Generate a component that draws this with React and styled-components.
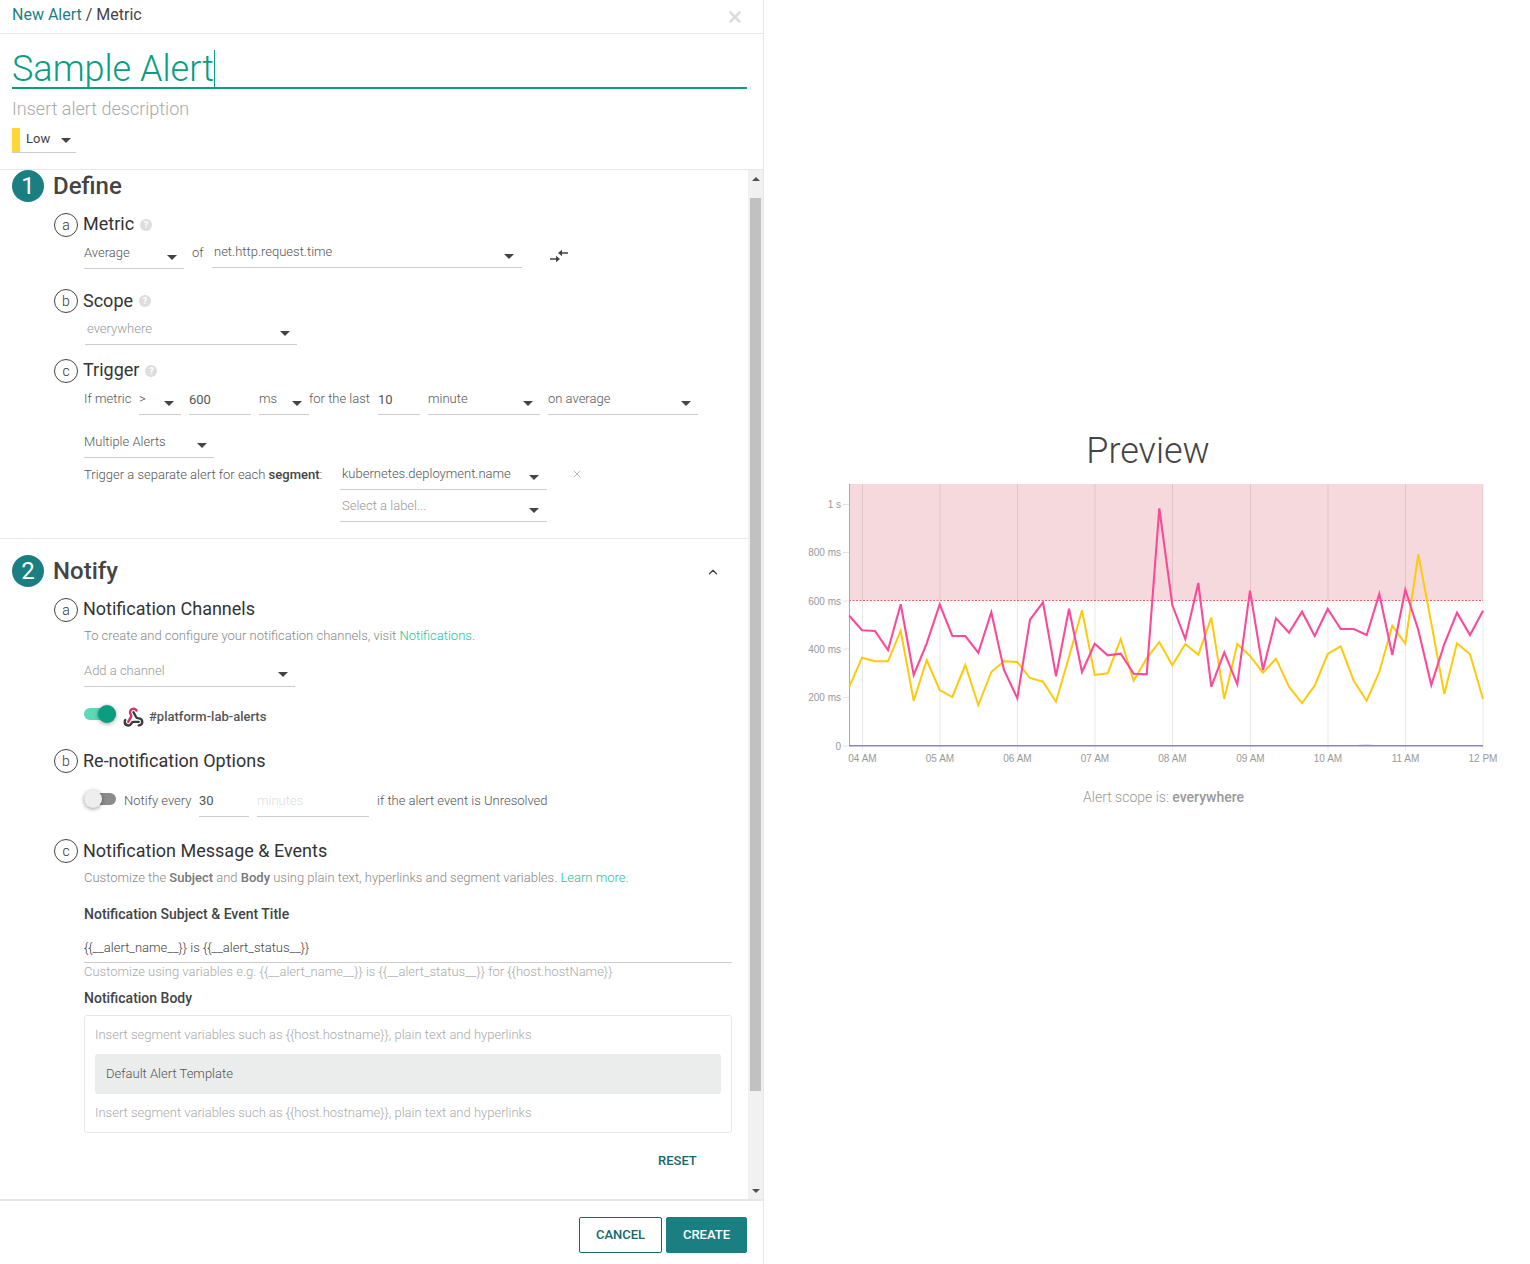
import React from 'react';
import styled, { createGlobalStyle } from 'styled-components';
import { ChevronUp, X } from 'lucide-react';

const GlobalStyle = createGlobalStyle`
  body {
    margin: 0;
    background: #fff;
    font-family: Roboto, "Noto Sans", sans-serif;
    color: #444;
  }
  * { box-sizing: border-box; }
`

const Page = styled.div`
  display: flex;
  width: 1530px;
  height: 1264px;
  overflow: hidden;
`

const Editor = styled.div`
  display: flex;
  flex-direction: column;
  width: 764px;
  height: 100%;
  border-right: 1px solid #e3e9e9;
`

const Header = styled.div`
  display: flex;
  justify-content: space-between;
  height: 34px;
  padding: 5px 19px 0 12px;
  border-bottom: 1px solid #e3e9e9;
  font-size: 16px;
  line-height: 19px;
`

const Crumb = styled.a`
  color: #1b7f82;
`

const CloseIcon = styled(X)`
  margin-top: 3px;
  color: #ddd;
`

const TitleBlock = styled.div`
  padding: 0 16px 16px 12px;
  border-bottom: 1px solid #e3e9e9;
`

const TitleField = styled.div`
  display: flex;
  align-items: flex-end;
  height: 55px;
  border-bottom: 2px solid #0a9d80;
  font-size: 36px;
  font-weight: 300;
  line-height: 35px;
  color: #0a9d80;
`

const Cursor = styled.span`
  width: 1px;
  height: 37px;
  background: #0a9d80;
`

const Description = styled.div`
  margin-top: 8px;
  font-size: 18px;
  font-weight: 300;
  line-height: 24px;
  color: #aaa;
`

const Severity = styled.div`
  display: flex;
  width: 64px;
  height: 25px;
  margin-top: 7px;
  border-bottom: 1px solid #ccc;
  font-size: 13px;
  line-height: 22px;
`

const SeverityBar = styled.span`
  width: 8px;
  height: 24px;
  margin-right: 6px;
  background: #ffd633;
`

const Main = styled.div`
  display: flex;
  flex: 1;
  min-height: 0;
`

const Content = styled.div`
  flex: 1;
  min-width: 0;
`

const Section = styled.section`
  padding: ${(p) => (p.$first ? '0' : '16px')} 0 16px;
  border-bottom: ${(p) => (p.$first ? '1px solid #e3e9e9' : 'none')};
`

const StepHead = styled.div`
  display: flex;
  align-items: center;
  height: 32px;
  padding: 0 28px 0 12px;
`

const StepNumber = styled.span`
  display: flex;
  align-items: center;
  justify-content: center;
  width: 32px;
  height: 32px;
  margin-right: 9px;
  border-radius: 50%;
  background: #1b7f82;
  color: #fff;
  font-size: 24px;
`

const StepTitle = styled.h2`
  flex: 1;
  margin: 0;
  font-size: 24px;
  font-weight: 500;
  color: #444;
`

const Collapse = styled(ChevronUp)`
  margin-top: 2px;
`

const SubHead = styled.div`
  display: flex;
  align-items: center;
  height: 24px;
  margin: ${(p) => p.$mt}px 0 0 54px;
`

const Letter = styled.span`
  display: flex;
  align-items: center;
  justify-content: center;
  width: 24px;
  height: 24px;
  margin-right: 5px;
  border: 1px solid #444;
  border-radius: 50%;
  font-size: 14px;
  font-weight: 300;
  line-height: 20px;
  color: #333;
`

const SubTitle = styled.h3`
  margin: 0 0 ${(p) => (p.$raised ? 4 : 2)}px;
  font-size: 18px;
  font-weight: 400;
  color: #333;
`

const Help = styled.span`
  display: flex;
  align-items: center;
  justify-content: center;
  width: 12px;
  height: 12px;
  margin-left: 6px;
  border-radius: 50%;
  background: #ddd;
  color: #fff;
  font-size: 9px;
  font-weight: 700;
`

const Row = styled.div`
  display: flex;
  align-items: flex-start;
  margin: ${(p) => p.$mt || 0}px 0 0 84px;
  height: ${(p) => (p.$h ? `${p.$h}px` : 'auto')};
`

const Plain = styled.span`
  flex: none;
  width: ${(p) => (p.$w ? `${p.$w}px` : 'auto')};
  margin: ${(p) => p.$mt || 0}px 0 0 ${(p) => p.$ml || 0}px;
  font-size: 13px;
  font-weight: 300;
  line-height: 18px;
  color: #555;
  white-space: nowrap;

  b { font-weight: 500; color: #444; }
`

const selectColor = (p) => {
  if (p.$faint) return '#ddd'
  return p.$muted ? '#999' : '#555'
}

const Select = styled.div`
  flex: none;
  display: flex;
  justify-content: space-between;
  width: ${(p) => p.$w}px;
  height: 26px;
  margin: ${(p) => p.$mt || 0}px 0 0 ${(p) => p.$ml || 0}px;
  padding: ${(p) => p.$tp || 1}px ${(p) => p.$pr || 7}px 0 ${(p) => p.$pad || 0}px;
  border-bottom: 1px solid #ccc;
  font-size: 13px;
  font-weight: ${(p) => (p.$value ? 400 : 300)};
  line-height: 18px;
  color: ${selectColor};
`

const Caret = styled.i`
  flex: none;
  width: 0;
  height: 0;
  margin: ${(p) => p.$mt || 11}px 0 0 ${(p) => p.$ml || 0}px;
  border-top: 5px solid #444;
  border-left: 5px solid transparent;
  border-right: 5px solid transparent;
`

const Note = styled.p`
  margin: ${(p) => p.$mt}px 0 0 84px;
  font-size: 13px;
  font-weight: 300;
  line-height: 18px;
  color: #888;

  b { font-weight: 500; color: #777; }
`

const Link = styled.a`
  color: #22c39d;
`

const SwitchTrack = styled.span`
  position: relative;
  flex: none;
  display: block;
  width: 32px;
  height: 12px;
  margin-top: 3px;
  border-radius: 6px;
  background: ${(p) => (p.$on ? '#5cdab8' : '#8c8c8c')};
`

const SwitchKnob = styled.span`
  position: absolute;
  top: -3px;
  left: ${(p) => (p.$on ? '14px' : '0')};
  width: 18px;
  height: 18px;
  border-radius: 50%;
  background: ${(p) => (p.$on ? '#0a9d80' : '#eeeeee')};
  box-shadow: 0 1px 4px rgba(0, 0, 0, 0.4);
`

const ChannelName = styled.span`
  margin: 3px 0 0 5px;
  font-size: 13px;
  font-weight: 500;
  line-height: 18px;
  color: #555;
`

const HookIcon = styled.svg`
  flex: none;
  width: 21px;
  height: 21px;
  margin: 2px 0 0 7px;
`

const SwapIcon = styled.svg`
  flex: none;
  width: 18px;
  height: 16px;
  margin: 11px 0 0 28px;
`

const RemoveIcon = styled(X)`
  flex: none;
  margin: 4px 0 0 24px;
  color: #aaa;
`

const Label = styled.div`
  margin: ${(p) => p.$mt}px 0 0 84px;
  font-size: 14px;
  font-weight: 500;
  line-height: 20px;
  color: #444;
`

const TextInput = styled.div`
  width: 648px;
  height: 25px;
  margin: 14px 0 0 84px;
  padding-top: 1px;
  border-bottom: 1px solid #ccc;
  font-size: 13px;
  font-weight: 300;
  line-height: 18px;
  color: #444;
`

const Hint = styled.div`
  margin-left: 84px;
  padding-top: 1px;
  font-size: 13px;
  font-weight: 300;
  line-height: 16px;
  color: #aaa;
`

const BodyBox = styled.div`
  width: 648px;
  height: 118px;
  margin: 7px 0 0 84px;
  padding: 10px 10px 0;
  border: 1px solid #e3e9e9;
  border-radius: 3px;
  font-size: 13px;
  font-weight: 300;
  line-height: 18px;
  color: #aaa;
`

const Template = styled.div`
  height: 40px;
  margin: 10px 0;
  padding: 0 11px;
  border-radius: 3px;
  background: #ebecec;
  line-height: 40px;
  color: #555;
`

const ResetButton = styled.button`
  display: block;
  margin: 20px 0 0 658px;
  padding: 0;
  border: none;
  background: none;
  font: 500 13px/16px Roboto, sans-serif;
  color: #15696b;
`

const Scrollbar = styled.div`
  display: flex;
  flex-direction: column;
  align-items: center;
  flex: none;
  width: 15px;
  background: #f1f1f1;
`

const ArrowCell = styled.span`
  display: flex;
  align-items: center;
  justify-content: center;
  flex: none;
  width: 15px;
  height: 17px;
`

const ArrowUp = styled.i`
  border-bottom: 4px solid #505050;
  border-left: 4px solid transparent;
  border-right: 4px solid transparent;
`

const ArrowDown = styled.i`
  border-top: 4px solid #505050;
  border-left: 4px solid transparent;
  border-right: 4px solid transparent;
`

const Track = styled.div`
  flex: 1;
  padding-top: 11px;
`

const Thumb = styled.div`
  width: 11px;
  height: 893px;
  background: #c1c1c1;
`

const Footer = styled.div`
  display: flex;
  justify-content: flex-end;
  gap: 4px;
  height: 65px;
  padding: 16px 16px 0 0;
  border-top: 2px solid #e3e9e9;
`

const Button = styled.button`
  width: ${(p) => p.$w}px;
  height: 36px;
  padding: 0 0 2px;
  border: 1px solid ${(p) => (p.$primary ? '#1b7f82' : '#15696b')};
  border-radius: 2px;
  background: ${(p) => (p.$primary ? '#1b7f82' : '#fff')};
  color: ${(p) => (p.$primary ? '#fff' : '#15696b')};
  font: 500 13px Roboto, sans-serif;
`

const Preview = styled.div`
  flex: 1;
  min-width: 0;
  padding-top: 430px;
`

const PreviewTitle = styled.h1`
  margin: 0;
  padding-left: 2px;
  text-align: center;
  font-size: 36px;
  font-weight: 300;
  line-height: 42px;
  color: #444;
`

const Chart = styled.svg`
  display: block;
  width: 766px;
  height: 316px;
  font-family: "Liberation Sans", Arial, sans-serif;
  font-size: 10px;
`

const ScopeNote = styled.p`
  margin: 0;
  padding-left: 33px;
  text-align: center;
  font-size: 14px;
  font-weight: 300;
  line-height: 18px;
  color: #999;

  b { font-weight: 500; }
`

const pink = [
  [178, 437], [216, 481], [255, 483], [294, 540], [332, 403], [371, 615], [410, 520], [449, 403], [487, 498], [526, 498],
  [565, 548], [604, 427], [642, 600], [682, 685], [720, 449], [759, 397], [798, 619], [837, 416], [876, 606], [914, 521],
  [953, 556], [992, 551], [1031, 611], [1070, 613], [1108, 115],
]
const pinkRight = [
  [97, 405], [136, 507], [175, 339], [214, 650], [253, 547], [292, 643], [330, 362], [369, 600], [408, 445], [447, 488],
  [486, 425], [524, 498], [563, 417], [602, 477], [641, 477], [680, 495], [718, 372], [757, 555], [796, 359], [835, 480],
  [874, 645], [913, 522], [951, 428], [990, 495], [1029, 422],
]
const yellow = [
  [178, 650], [216, 563], [255, 574], [294, 574], [332, 482], [371, 692], [410, 570], [449, 660], [487, 681], [526, 585],
  [565, 705], [604, 606], [642, 574], [682, 576], [720, 624], [759, 635], [798, 695], [837, 560], [876, 421], [914, 615],
  [953, 610], [992, 507], [1031, 632], [1070, 565], [1108, 516],
]
const yellowRight = [
  [97, 586], [136, 522], [175, 554], [214, 443], [253, 687], [292, 522], [330, 558], [369, 608], [408, 566], [447, 650],
  [486, 699], [524, 647], [563, 552], [602, 529], [641, 632], [680, 692], [718, 606], [757, 467], [796, 521], [835, 253],
  [874, 460], [913, 672], [951, 520], [990, 553], [1029, 687],
]

// the points were read off two crops of the chart, so shift each back to page pixels
const toPoints = (left, right) =>
  [
    ...left.map(([x, y]) => [790 + x / 3, 470 + y / 3]),
    ...right.map(([x, y]) => [1140 + x / 3, 470 + y / 3]),
  ]
    .map(([x, y]) => `${x.toFixed(1)},${y.toFixed(1)}`)
    .join(' ')

const hours = [
  ['04 AM', 862.5], ['05 AM', 940], ['06 AM', 1017.5], ['07 AM', 1095], ['08 AM', 1172.5],
  ['09 AM', 1250.5], ['10 AM', 1328], ['11 AM', 1405.5], ['12 PM', 1483],
]
const levels = [
  ['1 s', 504.5, 507.5],
  ['800 ms', 552.5, 555.5],
  ['600 ms', 601, 605],
  ['400 ms', 649, 653],
  ['200 ms', 697.5, 700.5],
  ['0', 746, 750],
]

const PreviewChart = () => (
  <Chart viewBox="764 472 766 316">
    <rect x="849" y="484" width="634" height="116" fill="#f6d9dc" />
    {hours.map(([label, x]) => (
      <g key={label}>
        <line x1={x} x2={x} y1="484" y2="750" stroke="#000" strokeOpacity="0.09" />
        <text x={x} y="762" textAnchor="middle" fill="#999">{label}</text>
      </g>
    ))}
    {levels.map(([label, y, baseline]) => (
      <g key={label}>
        <line x1="843" x2="849" y1={y} y2={y} stroke="#e3e3e3" />
        <text x="841" y={baseline} textAnchor="end" fill="#999">{label}</text>
      </g>
    ))}
    <line x1="849" x2="1483" y1="600.5" y2="600.5" stroke="#e8606c" strokeDasharray="2 1.5" />
    <line x1="849.5" x2="849.5" y1="484" y2="746" stroke="#aaa" />
    <polyline points={toPoints(yellow, yellowRight)} fill="none" stroke="#fdca0c" strokeWidth="2" />
    <polyline points={toPoints(pink, pinkRight)} fill="none" stroke="#fb4a9a" strokeWidth="2.1" />
    <path d="M1354 745.5 Q1366 743.5 1378 745.5 Z" fill="#b9aee6" />
    <line x1="849" x2="1483" y1="745.8" y2="745.8" stroke="#8f82cc" strokeWidth="1.4" />
  </Chart>
)

const Dropdown = ({ children, $tall, ...rest }) => (
  <Select {...rest}>
    <span>{children}</span>
    <Caret $mt={$tall ? 10 : 11} />
  </Select>
)

const Sub = ({ letter, title, mt, help, raised }) => (
  <SubHead $mt={mt}>
    <Letter>{letter}</Letter>
    <SubTitle $raised={raised}>{title}</SubTitle>
    {help && <Help>?</Help>}
  </SubHead>
)

const Webhook = () => (
  <HookIcon viewBox="0 0 24 24" fill="none" strokeWidth="2.8" strokeLinecap="round" strokeLinejoin="round">
    <path stroke="#3a3a3a" d="M18 16.98h-5.99c-1.1 0-1.95.94-2.48 1.9A4 4 0 0 1 2 17c.01-.7.2-1.4.57-2" />
    <path stroke="#c73a63" d="m6 17 3.13-5.78c.53-.97.1-2.18-.5-3.1a4 4 0 1 1 6.89-4.06" />
    <path stroke="#3a3a3a" d="m12 6 3.13 5.73C15.66 12.7 16.9 13 18 13a4 4 0 0 1 0 8" />
  </HookIcon>
)

const Swap = () => (
  <SwapIcon viewBox="0 0 18 16" fill="#444">
    <path d="M12 4.2H18V5.8H12V8.2L8 5L12 1.8Z" />
    <path d="M0 10.2H6V7.8L10 11L6 14.2V11.8H0Z" />
  </SwapIcon>
)

const App = () => (
  <Page>
    <GlobalStyle />
    <Editor>
      <Header>
        <span><Crumb>New Alert</Crumb> / Metric</span>
        <CloseIcon size={18} strokeWidth={3.5} />
      </Header>

      <TitleBlock>
        <TitleField>
          Sample Alert
          <Cursor />
        </TitleField>
        <Description>Insert alert description</Description>
        <Severity>
          <SeverityBar />
          <span>Low</span>
          <Caret $mt={10} $ml={11} />
        </Severity>
      </TitleBlock>

      <Main>
        <Content>
          <Section $first>
            <StepHead>
              <StepNumber>1</StepNumber>
              <StepTitle>Define</StepTitle>
            </StepHead>

            <Sub letter="a" title="Metric" mt={11} help raised />
            <Row $h={32}>
              <Dropdown $w={100} $mt={6}>Average</Dropdown>
              <Plain $w={12} $ml={8} $mt={7}>of</Plain>
              <Dropdown $w={310} $ml={8} $mt={5} $pad={2} $pr={8}>net.http.request.time</Dropdown>
              <Swap />
            </Row>

            <Sub letter="b" title="Scope" mt={20} help />
            <Row $h={32}>
              <Dropdown $w={212} $ml={1} $mt={6} $pad={2} $muted>everywhere</Dropdown>
            </Row>

            <Sub letter="c" title="Trigger" mt={14} help raised />
            <Row $h={32}>
              <Plain $w={55} $mt={7}>If metric</Plain>
              <Dropdown $w={42} $mt={6}>&gt;</Dropdown>
              <Select $w={62} $ml={8} $mt={6} $tp={2} $value>600</Select>
              <Dropdown $w={50} $ml={8} $mt={6}>ms</Dropdown>
              <Plain $w={69} $mt={7}>for the last</Plain>
              <Select $w={42} $mt={6} $tp={2} $value>10</Select>
              <Dropdown $w={112} $ml={8} $mt={6}>minute</Dropdown>
              <Dropdown $w={150} $ml={8} $mt={6}>on average</Dropdown>
            </Row>
            <Row $mt={17}>
              <Dropdown $w={130} $tall>Multiple Alerts</Dropdown>
            </Row>
            <Row $mt={6}>
              <Plain $w={256} $mt={2}>Trigger a separate alert for each <b>segment</b>:</Plain>
              <div>
                <Dropdown $w={207} $pad={2} $pr={8} $tall>kubernetes.deployment.name</Dropdown>
                <Dropdown $w={207} $mt={6} $pad={2} $pr={8} $muted>Select a label...</Dropdown>
              </div>
              <RemoveIcon size={12} strokeWidth={1.6} />
            </Row>
          </Section>

          <Section>
            <StepHead>
              <StepNumber>2</StepNumber>
              <StepTitle>Notify</StepTitle>
              <Collapse size={14} strokeWidth={2.2} />
            </StepHead>

            <Sub letter="a" title="Notification Channels" mt={11} raised />
            <Note $mt={5}>
              To create and configure your notification channels, visit <Link>Notifications</Link>.
            </Note>
            <Row $mt={16}>
              <Dropdown $w={211} $tall $muted>Add a channel</Dropdown>
            </Row>
            <Row $mt={18} $h={18}>
              <SwitchTrack $on><SwitchKnob $on /></SwitchTrack>
              <Webhook />
              <ChannelName>#platform-lab-alerts</ChannelName>
            </Row>

            <Sub letter="b" title="Re-notification Options" mt={26} />
            <Row $mt={17} $h={27}>
              <SwitchTrack><SwitchKnob /></SwitchTrack>
              <Plain $w={75} $ml={8} $mt={2}>Notify every</Plain>
              <Select $w={50} $mt={1} $value>30</Select>
              <Select $w={112} $ml={8} $mt={1} $faint>minutes</Select>
              <Plain $ml={8} $mt={2}>if the alert event is Unresolved</Plain>
            </Row>

            <Sub letter="c" title="Notification Message & Events" mt={22} />
            <Note $mt={6}>
              Customize the <b>Subject</b> and <b>Body</b> using plain text, hyperlinks and segment variables. <Link>Learn more</Link>.
            </Note>
            <Label $mt={17}>Notification Subject &amp; Event Title</Label>
            <TextInput>{'{{__alert_name__}} is {{__alert_status__}}'}</TextInput>
            <Hint>{'Customize using variables e.g. {{__alert_name__}} is {{__alert_status__}} for {{host.hostName}}'}</Hint>
            <Label $mt={8}>Notification Body</Label>
            <BodyBox>
              Insert segment variables such as {'{{host.hostname}}'}, plain text and hyperlinks
              <Template>Default Alert Template</Template>
              Insert segment variables such as {'{{host.hostname}}'}, plain text and hyperlinks
            </BodyBox>
            <ResetButton>RESET</ResetButton>
          </Section>
        </Content>

        <Scrollbar>
          <ArrowCell><ArrowUp /></ArrowCell>
          <Track><Thumb /></Track>
          <ArrowCell><ArrowDown /></ArrowCell>
        </Scrollbar>
      </Main>

      <Footer>
        <Button $w={83}>CANCEL</Button>
        <Button $w={81} $primary>CREATE</Button>
      </Footer>
    </Editor>

    <Preview>
      <PreviewTitle>Preview</PreviewTitle>
      <PreviewChart />
      <ScopeNote>Alert scope is: <b>everywhere</b></ScopeNote>
    </Preview>
  </Page>
)

export default App
